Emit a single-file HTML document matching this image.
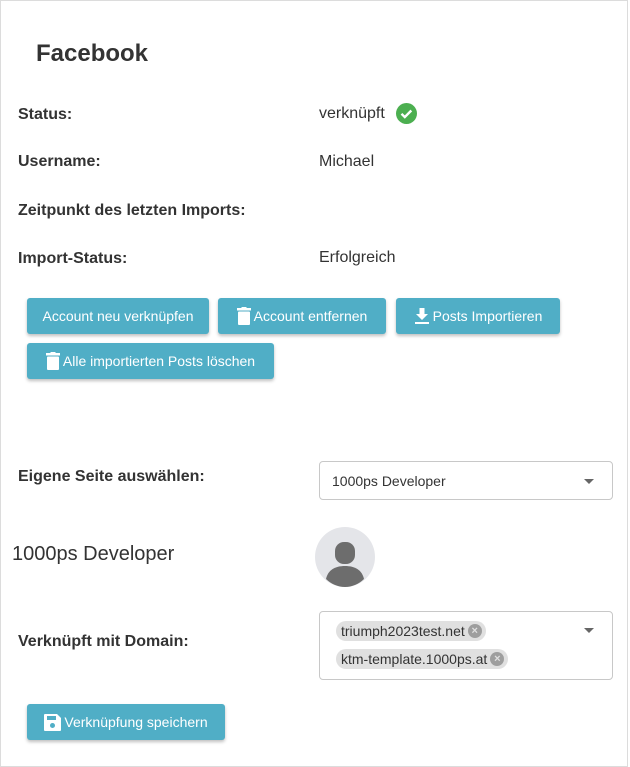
<!DOCTYPE html>
<html><head><meta charset="utf-8"><style>
*{margin:0;padding:0;box-sizing:border-box}
body{width:630px;height:767px;background:#fff;font-family:"Liberation Sans",Arial,sans-serif;color:#333;position:relative;overflow:hidden}
.frame{position:absolute;left:0;top:0;width:628px;height:767px;border:1px solid #dcdcdc}
.a{position:absolute;white-space:nowrap}
.lbl{font-weight:bold;font-size:16px;color:#333}
.val{font-size:16px;color:#333}
.btn{position:absolute;height:36px;background:#50aec6;color:#fff;font-size:14px;border-radius:3px;box-shadow:0 2px 3px rgba(0,0,0,.25);display:flex;align-items:center;justify-content:center;gap:3px}
.sel{position:absolute;border:1px solid #c8c8c8;border-radius:4px;background:#fff}
.caret{position:absolute;width:0;height:0;border-left:5px solid transparent;border-right:5px solid transparent;border-top:5px solid #666}
.chip{position:absolute;left:16px;height:20px;background:#e0e0e0;border-radius:10px;font-size:14px;color:#333;padding:0 4px 0 5px;display:flex;align-items:center;gap:3px}
.x{width:14px;height:14px;border-radius:50%;background:#9e9e9e;color:#e0e0e0;font-size:11px;line-height:14px;text-align:center;font-weight:bold}
</style></head><body>
<div class="frame"></div>
<div class="a" style="left:36px;top:40px;font-size:24px;font-weight:bold;color:#333">Facebook</div>

<div class="a lbl" style="left:18px;top:106px">Status:</div>
<div class="a val" style="left:319px;top:105px">verknüpft</div>
<svg class="a" style="left:396px;top:103px" width="21" height="21" viewBox="0 0 21 21"><circle cx="10.5" cy="10.5" r="10.5" fill="#4caf50"/><path d="M5.5 10.8l3.3 3.3 6.5-6.6" stroke="#fff" stroke-width="2.4" fill="none"/></svg>

<div class="a lbl" style="left:18px;top:153px">Username:</div>
<div class="a val" style="left:319px;top:153px">Michael</div>
<div class="a lbl" style="left:18px;top:202px">Zeitpunkt des letzten Imports:</div>
<div class="a lbl" style="left:18px;top:250px">Import-Status:</div>
<div class="a val" style="left:319px;top:249px">Erfolgreich</div>

<div class="btn" style="left:27px;top:298px;width:182px">Account neu verknüpfen</div>
<div class="btn" style="left:218px;top:298px;width:168px"><svg width="14" height="18" viewBox="0 0 14 18"><rect x="0" y="1" width="14" height="2.5" fill="#fff"/><rect x="4.5" y="0" width="5" height="2" fill="#fff"/><rect x="1" y="4.5" width="12" height="13.5" rx="1" fill="#fff"/></svg>Account entfernen</div>
<div class="btn" style="left:396px;top:298px;width:164px"><svg width="16" height="18" viewBox="0 0 16 18"><path d="M5.5 1h5v6h3.5l-6 6-6-6h3.5z" fill="#fff"/><rect x="1" y="15" width="14" height="2" fill="#fff"/></svg>Posts Importieren</div>
<div class="btn" style="left:27px;top:343px;width:247px"><svg width="14" height="18" viewBox="0 0 14 18"><rect x="0" y="1" width="14" height="2.5" fill="#fff"/><rect x="4.5" y="0" width="5" height="2" fill="#fff"/><rect x="1" y="4.5" width="12" height="13.5" rx="1" fill="#fff"/></svg>Alle importierten Posts löschen</div>

<div class="a lbl" style="left:18px;top:468px">Eigene Seite auswählen:</div>
<div class="sel" style="left:319px;top:461px;width:294px;height:39px"><div class="a" style="left:12px;top:11px;font-size:14px">1000ps Developer</div><div class="caret" style="left:264px;top:17px"></div></div>

<div class="a" style="left:12px;top:543px;font-size:20px;color:#333">1000ps Developer</div>
<svg class="a" style="left:315px;top:527px" width="60" height="60" viewBox="0 0 60 60"><circle cx="30" cy="30" r="30" fill="#e4e5e9"/><rect x="20" y="15" width="20" height="22" rx="9" fill="#6d6d6d"/><path d="M11 52c2-9 9-13 19-13s17 4 19 13c-5 5-12 8-19 8s-14-3-19-8z" fill="#6d6d6d"/></svg>

<div class="a lbl" style="left:18px;top:633px">Verknüpft mit Domain:</div>
<div class="sel" style="left:319px;top:611px;width:294px;height:69px">
<div class="chip" style="top:9px">triumph2023test.net<span class="x">×</span></div>
<div class="chip" style="top:37px">ktm-template.1000ps.at<span class="x">×</span></div>
<div class="caret" style="left:264px;top:16px"></div></div>

<div class="btn" style="left:27px;top:704px;width:198px"><svg width="17" height="17" viewBox="0 0 17 17"><path d="M1 0h12l4 4v12a1 1 0 0 1-1 1H1a1 1 0 0 1-1-1V1a1 1 0 0 1 1-1z" fill="#fff"/><rect x="3" y="2" width="9" height="4" fill="#50aec6"/><circle cx="8.5" cy="11.5" r="2.5" fill="#50aec6"/></svg>Verknüpfung speichern</div>
</body></html>
